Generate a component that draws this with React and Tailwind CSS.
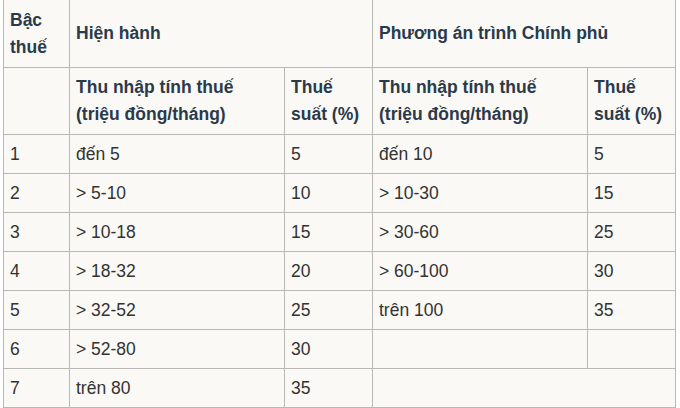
import React from 'react';

const rows = [
  ['1', 'đến 5', '5', 'đến 10', '5'],
  ['2', '> 5-10', '10', '> 10-30', '15'],
  ['3', '> 10-18', '15', '> 30-60', '25'],
  ['4', '> 18-32', '20', '> 60-100', '30'],
  ['5', '> 32-52', '25', 'trên 100', '35'],
  ['6', '> 52-80', '30', '', ''],
];

const Head = ({ children, className = '' }) => (
  <div className={`bg-[#faf9f5] px-[6px] flex items-center font-bold text-[#2b3a4b] ${className}`}>
    <div>{children}</div>
  </div>
);

const Cell = ({ children, className = '' }) => (
  <div className={`bg-[#faf9f5] px-[6px] flex items-center text-[#333] ${className}`}>{children}</div>
);

export default function App() {
  return (
    <div className="w-[680px] h-[408px] bg-white overflow-hidden">
      <div
        className="ml-[3px] mt-[-1px] w-[673px] grid grid-cols-[65px_214px_87px_214px_87px] grid-rows-[67px_66px_repeat(7,38px)] gap-px p-px bg-[#b8b8b5] text-[17.5px] leading-[27px]"
        style={{ fontFamily: "'Liberation Sans', Arial, sans-serif" }}
      >
        <Head>Bậc<br />thuế</Head>
        <Head className="col-span-2">Hiện hành</Head>
        <Head className="col-span-2">Phương án trình Chính phủ</Head>

        <Head></Head>
        <Head>Thu nhập tính thuế<br />(triệu đồng/tháng)</Head>
        <Head>Thuế<br />suất (%)</Head>
        <Head>Thu nhập tính thuế<br />(triệu đồng/tháng)</Head>
        <Head>Thuế<br />suất (%)</Head>

        {rows.map((r, i) =>
          r.map((c, j) => <Cell key={`${i}-${j}`}>{c}</Cell>)
        )}

        <Cell>7</Cell>
        <Cell>trên 80</Cell>
        <Cell>35</Cell>
        <Cell className="col-span-2"></Cell>
      </div>
    </div>
  );
}
